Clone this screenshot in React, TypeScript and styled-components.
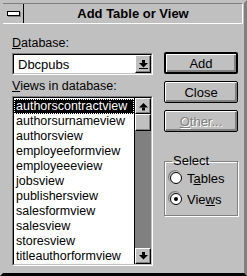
import React from "react";
import styled, { createGlobalStyle } from "styled-components";

const Global = createGlobalStyle`
    html, body {
        margin: 0;
        padding: 0;
        background: #c0c0c0;
    }
    body {
        font-family: "Liberation Sans", Arial, sans-serif;
        font-size: 13px;
    }
`;

const Window = styled.div`
    width: 247px;
    height: 276px;
    box-sizing: border-box;
    background: #c0c0c0;
    border-top: 3px solid #c0c0c0;
    border-left: 3px solid #c0c0c0;
    border-right: 3px solid #808080;
    border-bottom: 3px solid #000000;
    display: flex;
    flex-direction: column;
`;

const TitleBar = styled.div`
    height: 21px;
    box-sizing: border-box;
    display: flex;
    border-top: 1px solid #808080;
    border-right: 1px solid #ffffff;
    border-bottom: 1px solid #ffffff;
    margin-right: 1px;
`;

const SysMenu = styled.div`
    width: 20px;
    display: flex;
    align-items: center;
    justify-content: center;
    border-right: 1px solid #000000;
`;

const SysGlyph = styled.div`
    width: 11px;
    height: 3px;
    background: #ffffff;
    border: 1px solid #000000;
    box-shadow: 1px 1px 0 #808080;
`;

const Title = styled.div`
    flex: 1;
    display: flex;
    align-items: center;
    justify-content: center;
    font-weight: bold;
    font-size: 13px;
    color: #000000;
`;

const Body = styled.div`
    flex: 1;
    display: flex;
    gap: 11px;
    padding: 13px 0 0 9px;
`;

const LeftCol = styled.div`
    width: 141px;
    display: flex;
    flex-direction: column;
`;

const RightCol = styled.div`
    width: 74px;
    display: flex;
    flex-direction: column;
    padding-top: 15px;
`;

const Label = styled.div`
    height: 13px;
    line-height: 13px;
    margin-bottom: 3px;
    font-size: 12.5px;
    color: #000000;
`;

const Sunken = styled.div`
    box-sizing: border-box;
    background: #ffffff;
    border-top: 1px solid #808080;
    border-left: 1px solid #808080;
    border-right: 1px solid #ffffff;
    border-bottom: 1px solid #ffffff;
`;

const SunkenInner = styled.div`
    height: 100%;
    box-sizing: border-box;
    border-top: 1px solid #000000;
    border-left: 1px solid #000000;
    border-right: 1px solid #c0c0c0;
    border-bottom: 1px solid #c0c0c0;
    display: flex;
`;

const Combo = styled(Sunken)`
    height: 22px;
    margin-bottom: 5px;
`;

const ComboText = styled.div`
    flex: 1;
    padding-left: 4px;
    display: flex;
    align-items: center;
`;

const Raised = styled.div<{ $w?: number; $h: number }>`
    width: ${(p) => p.$w ?? 16}px;
    height: ${(p) => p.$h}px;
    box-sizing: border-box;
    background: #c0c0c0;
    border-top: 1px solid #ffffff;
    border-left: 1px solid #ffffff;
    border-right: 1px solid #000000;
    border-bottom: 1px solid #000000;
    box-shadow: inset -1px -1px 0 #808080;
    display: flex;
    align-items: center;
    justify-content: center;
    flex-shrink: 0;
`;

const List = styled(Sunken)`
    height: 170px;
`;

const Items = styled.div`
    flex: 1;
    display: flex;
    flex-direction: column;
    padding-top: 1px;
    overflow: hidden;
`;

const Item = styled.div<{ $sel?: boolean }>`
    height: 15px;
    line-height: 13px;
    padding-left: 1px;
    box-sizing: border-box;
    white-space: nowrap;
    font-size: 12.5px;
    color: ${(p) => (p.$sel ? "#ffffff" : "#000000")};
    background: ${(p) => (p.$sel ? "#000000" : "transparent")};
    border: 1px dotted ${(p) => (p.$sel ? "#ffffff" : "transparent")};
`;

const ScrollBar = styled.div`
    width: 16px;
    display: flex;
    flex-direction: column;
    background: #808080;
    border-left: 1px solid #000000;
`;

const Track = styled.div`
    flex: 1;
`;

const Button = styled.div<{ $default?: boolean; $disabled?: boolean }>`
    height: 22px;
    box-sizing: border-box;
    margin-bottom: 7px;
    border: ${(p) => (p.$default ? 2 : 1)}px solid #000000;
    border-radius: 2px;
    background: #c0c0c0;
    box-shadow: inset 1px 1px 0 #ffffff, inset -2px -2px 0 #808080;
    display: flex;
    align-items: center;
    justify-content: center;
    color: ${(p) => (p.$disabled ? "#808080" : "#000000")};
    text-shadow: ${(p) => (p.$disabled ? "1px 1px 0 #ffffff" : "none")};
`;

const Group = styled.fieldset`
    margin: 16px 0 0 0;
    padding: 4px 0 0 5px;
    height: 61px;
    box-sizing: border-box;
    border: 1px solid #808080;
    box-shadow: 1px 1px 0 #ffffff, inset 1px 1px 0 #ffffff;
    display: flex;
    flex-direction: column;
    gap: 7px;
`;

const Legend = styled.legend`
    padding: 0 1px;
    margin-left: 2px;
    line-height: 12px;
`;

const Radio = styled.div`
    display: flex;
    align-items: center;
    gap: 5px;
    height: 14px;
`;

const Circle = styled.div<{ $on?: boolean }>`
    width: 12px;
    height: 12px;
    box-sizing: border-box;
    border-radius: 50%;
    background: #ffffff;
    border: 1px solid #000000;
    box-shadow: 0 0 0 1px #c0c0c0, -1px -1px 0 1px #808080;
    display: flex;
    align-items: center;
    justify-content: center;
    &::after {
        content: "";
        width: 4px;
        height: 4px;
        border-radius: 50%;
        background: ${(p) => (p.$on ? "#000000" : "transparent")};
    }
`;

const U = styled.span`
    text-decoration: underline;
`;

function Arrow({ dir, bar }: { dir: "up" | "down"; bar?: boolean }) {
    return (
        <svg width="9" height="9" viewBox="0 0 9 9">
            {dir === "down" ? (
                <>
                    <rect x="3" y="0" width="3" height="3" fill="#000" />
                    <polygon points="0,3 9,3 4.5,7.5" fill="#000" />
                    {bar && <rect x="0" y="8" width="9" height="1" fill="#000" />}
                </>
            ) : (
                <>
                    <polygon points="4.5,1 9,5.5 0,5.5" fill="#000" />
                    <rect x="3" y="5.5" width="3" height="3" fill="#000" />
                </>
            )}
        </svg>
    );
}

const views = [
    "authorscontractview",
    "authorsurnameview",
    "authorsview",
    "employeeformview",
    "employeeeview",
    "jobsview",
    "publishersview",
    "salesformview",
    "salesview",
    "storesview",
    "titleauthorformview",
];

export default function App() {
    return (
        <>
            <Global />
            <Window>
                <TitleBar>
                    <SysMenu>
                        <SysGlyph />
                    </SysMenu>
                    <Title>Add Table or View</Title>
                </TitleBar>
                <Body>
                    <LeftCol>
                        <Label>
                            <U>D</U>atabase:
                        </Label>
                        <Combo>
                            <SunkenInner>
                                <ComboText>Dbcpubs</ComboText>
                                <Raised $h={18}>
                                    <Arrow dir="down" bar />
                                </Raised>
                            </SunkenInner>
                        </Combo>
                        <Label>
                            <U>V</U>iews in database:
                        </Label>
                        <List>
                            <SunkenInner>
                                <Items>
                                    {views.map((v, i) => (
                                        <Item key={v} $sel={i === 0}>
                                            {v}
                                        </Item>
                                    ))}
                                </Items>
                                <ScrollBar>
                                    <Raised $h={16}>
                                        <Arrow dir="up" />
                                    </Raised>
                                    <Raised $h={17} />
                                    <Track />
                                    <Raised $h={16}>
                                        <Arrow dir="down" />
                                    </Raised>
                                </ScrollBar>
                            </SunkenInner>
                        </List>
                    </LeftCol>
                    <RightCol>
                        <Button $default>Add</Button>
                        <Button>Close</Button>
                        <Button $disabled>
                            <U>O</U>ther...
                        </Button>
                        <Group>
                            <Legend>Select</Legend>
                            <Radio>
                                <Circle />
                                <span>
                                    T<U>a</U>bles
                                </span>
                            </Radio>
                            <Radio>
                                <Circle $on />
                                <span>
                                    Vie<U>w</U>s
                                </span>
                            </Radio>
                        </Group>
                    </RightCol>
                </Body>
            </Window>
        </>
    );
}
